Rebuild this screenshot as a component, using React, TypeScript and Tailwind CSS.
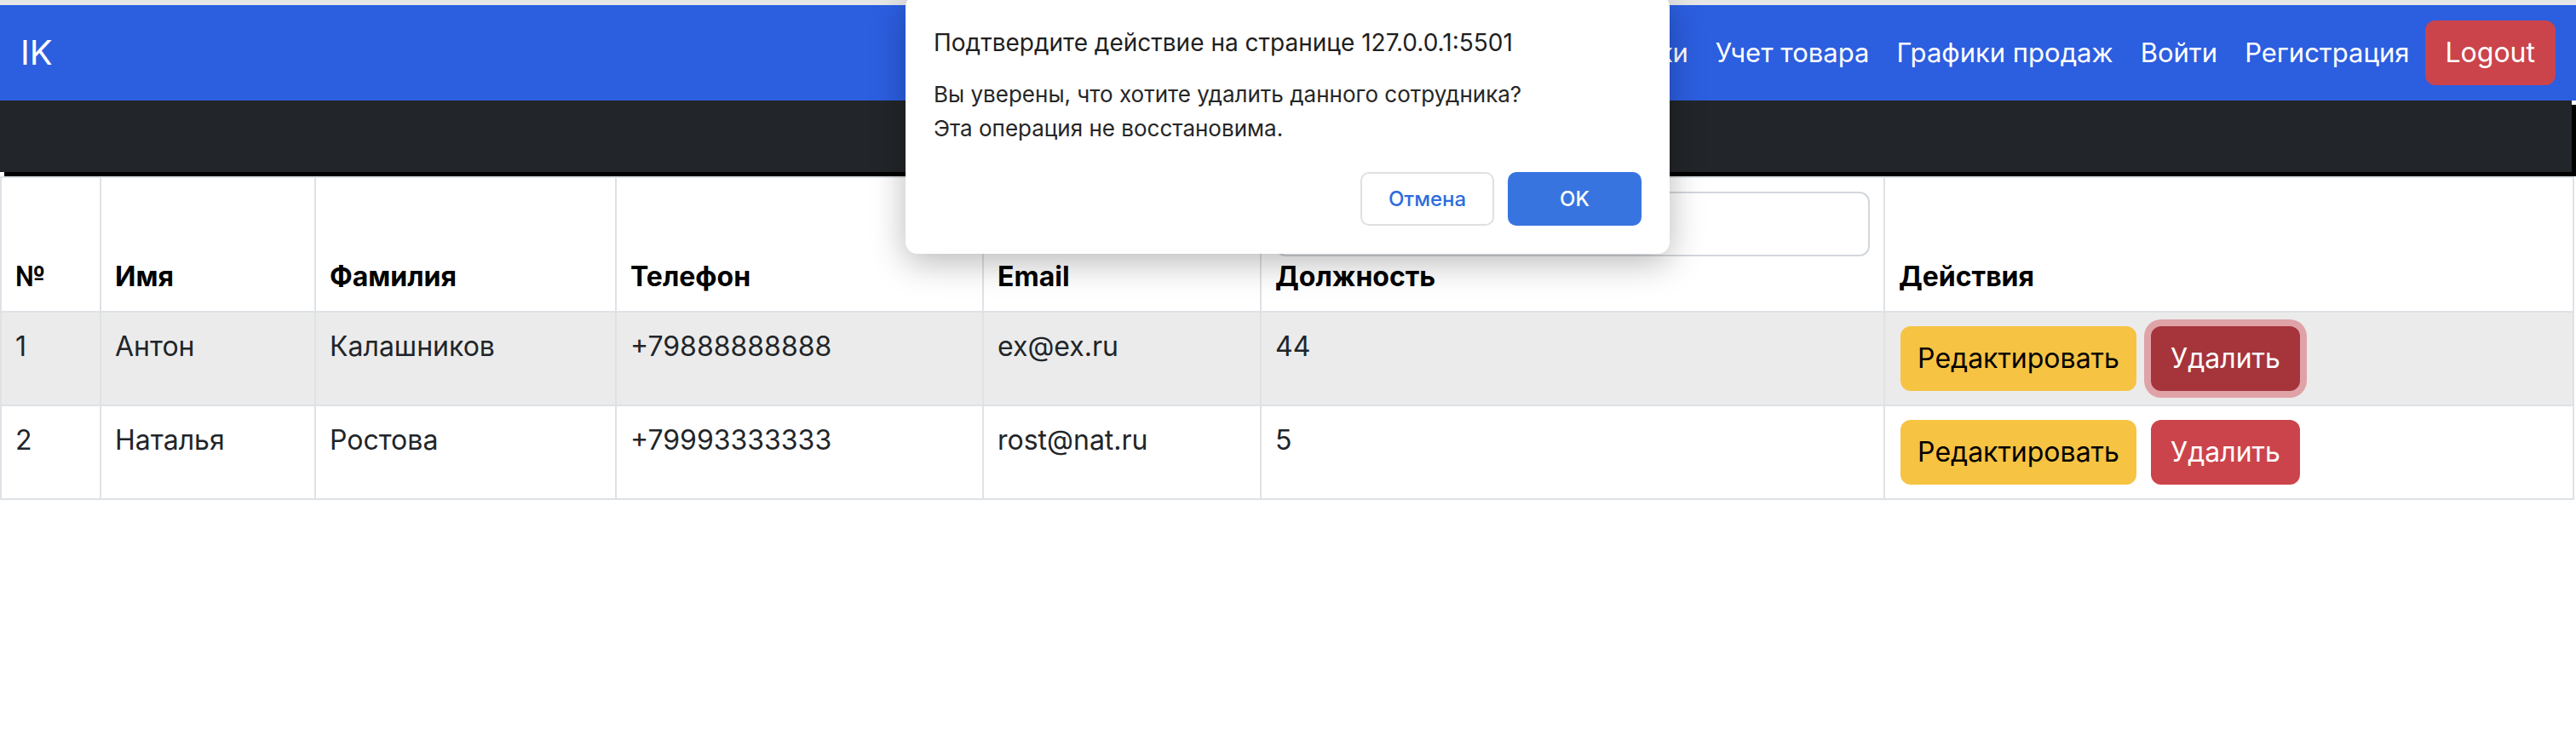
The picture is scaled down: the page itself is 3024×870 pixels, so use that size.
import React from "react";

interface Employee {
  id: number;
  firstName: string;
  lastName: string;
  phone: string;
  email: string;
  position: string;
}

const employees: Employee[] = [
  { id: 1, firstName: "Антон", lastName: "Калашников", phone: "+79888888888", email: "ex@ex.ru", position: "44" },
  { id: 2, firstName: "Наталья", lastName: "Ростова", phone: "+79993333333", email: "rost@nat.ru", position: "5" },
];

const navLinks = ["Сотрудники", "Учет товара", "Графики продаж", "Войти", "Регистрация"];

const ConfirmDialog: React.FC = () => (
  <div className="absolute left-[1063px] top-[-6px] w-[897px] rounded-[14px] bg-white px-[33px] pt-[38px] pb-[33px] shadow-[0_10px_40px_rgba(0,0,0,0.28)]">
    <p className="text-[28px] leading-[36px] text-[#1f1f1f]">
      Подтвердите действие на странице 127.0.0.1:5501
    </p>
    <div className="mt-[23px] text-[26px] leading-[40px] text-[#262626]">
      <p>Вы уверены, что хотите удалить данного сотрудника?</p>
      <p>Эта операция не восстановима.</p>
    </div>
    <div className="mt-[31px] flex justify-end gap-4">
      <button className="h-[63px] w-[157px] rounded-[10px] border-2 border-[#e0e0e0] bg-white text-[24px] font-medium text-[#2f6cdc]">
        Отмена
      </button>
      <button className="h-[63px] w-[157px] rounded-[10px] bg-[#3874e0] text-[24px] font-medium text-white">
        OK
      </button>
    </div>
  </div>
);

export default function App() {
  return (
    <div className="relative h-[870px] w-[3024px] overflow-hidden bg-white font-[Inter,sans-serif] text-[#212529]">
      <div className="h-[6px] bg-[#e6e6e6]" />

      {/* Navbar */}
      <nav className="flex h-[112px] items-center justify-between bg-[#2c5ee0] pl-[24px] pr-[24px]">
        <span className="text-[40px] leading-[60px] text-white">IK</span>
        <div className="flex items-center">
          {navLinks.map((link) => (
            <a key={link} className="px-4 text-[31px] leading-[48px] text-white">
              {link}
            </a>
          ))}
          <button className="ml-[2px] h-[76px] rounded-[12px] bg-[#cb444b] px-[24px] text-[32px] text-white">
            Logout
          </button>
        </div>
      </nav>

      {/* Dark header bar */}
      <div className="h-[84px] w-[3019px] bg-[#222529] shadow-[5px_5px_0_#000]" />

      {/* Employees table */}
      <table className="mt-[5px] w-[3022px] table-fixed border-collapse text-[32px] leading-[48px]">
        <colgroup>
          <col className="w-[117px]" />
          <col className="w-[252px]" />
          <col className="w-[353px]" />
          <col className="w-[431px]" />
          <col className="w-[326px]" />
          <col className="w-[732px]" />
          <col />
        </colgroup>
        <thead>
          <tr className="text-left align-bottom font-bold text-black">
            <th className="border-2 border-[#dee2e6] p-4">№</th>
            <th className="border-2 border-[#dee2e6] p-4">Имя</th>
            <th className="border-2 border-[#dee2e6] p-4">Фамилия</th>
            <th className="border-2 border-[#dee2e6] p-4">Телефон</th>
            <th className="border-2 border-[#dee2e6] p-4">Email</th>
            <th className="border-2 border-[#dee2e6] p-4">
              <input className="block h-[76px] w-full rounded-[12px] border-2 border-[#d3d7dc] bg-white" />
              Должность
            </th>
            <th className="border-2 border-[#dee2e6] p-4">Действия</th>
          </tr>
        </thead>
        <tbody>
          {employees.map((e, i) => (
            <tr key={e.id} className={i === 0 ? "bg-[#ebebeb] align-top" : "bg-white align-top"}>
              <td className="border-2 border-[#dee2e6] p-4">{e.id}</td>
              <td className="border-2 border-[#dee2e6] p-4">{e.firstName}</td>
              <td className="border-2 border-[#dee2e6] p-4">{e.lastName}</td>
              <td className="border-2 border-[#dee2e6] p-4">{e.phone}</td>
              <td className="border-2 border-[#dee2e6] p-4">{e.email}</td>
              <td className="border-2 border-[#dee2e6] p-4">{e.position}</td>
              <td className="border-2 border-[#dee2e6] p-4">
                <div className="flex gap-[17px] pl-[2px]">
                  <button className="h-[76px] w-[277px] rounded-[12px] bg-[#f6c343] text-[32px] text-black">
                    Редактировать
                  </button>
                  <button
                    className={
                      i === 0
                        ? "h-[76px] w-[175px] rounded-[12px] bg-[#a5343b] text-[32px] text-white ring-8 ring-[#dfa3a7]"
                        : "h-[76px] w-[175px] rounded-[12px] bg-[#cc444b] text-[32px] text-white"
                    }
                  >
                    Удалить
                  </button>
                </div>
              </td>
            </tr>
          ))}
        </tbody>
      </table>

      <ConfirmDialog />
    </div>
  );
}
